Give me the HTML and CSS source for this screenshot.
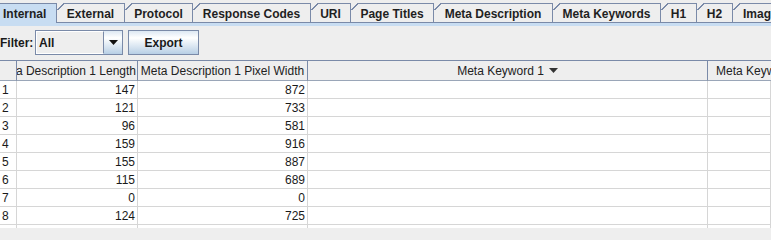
FILE: index.html
```html
<!DOCTYPE html>
<html>
<head>
<meta charset="utf-8">
<link rel="stylesheet" href="styles.css">
</head>
<body>
<div class="tabbar">
  <div class="tab sel w-internal">Internal</div>
  <div class="tab w-external">External</div>
  <div class="tab w-protocol">Protocol</div>
  <div class="tab w-response">Response Codes</div>
  <div class="tab w-uri">URI</div>
  <div class="tab w-titles">Page Titles</div>
  <div class="tab w-mdesc">Meta Description</div>
  <div class="tab w-mkey">Meta Keywords</div>
  <div class="tab w-h1">H1</div>
  <div class="tab w-h2">H2</div>
  <div class="tab w-img">Images</div>
</div>
<div class="tabline"></div>
<div class="toolbar">
  <span class="label">Filter:</span>
  <div class="combo">
    <div class="combo-text">All</div>
    <div class="combo-btn"><svg width="9" height="5" viewBox="0 0 9 5"><path d="M0 0H9L4.5 5Z" fill="#111"/></svg></div>
  </div>
  <div class="button">Export</div>
</div>
<div class="table">
  <div class="hcell"></div>
  <div class="hcell clip"><span>Meta Description 1 Length</span></div>
  <div class="hcell center">Meta Description 1 Pixel Width</div>
  <div class="hcell center">Meta Keyword 1<svg class="sort" width="9" height="5" viewBox="0 0 9 5"><path d="M0 0H9L4.5 5Z" fill="#333"/></svg></div>
  <div class="hcell last">Meta Keyword 2</div>

  <div class="cell num">1</div><div class="cell r">147</div><div class="cell r">872</div><div class="cell"></div><div class="cell"></div>
  <div class="cell num">2</div><div class="cell r">121</div><div class="cell r">733</div><div class="cell"></div><div class="cell"></div>
  <div class="cell num">3</div><div class="cell r">96</div><div class="cell r">581</div><div class="cell"></div><div class="cell"></div>
  <div class="cell num">4</div><div class="cell r">159</div><div class="cell r">916</div><div class="cell"></div><div class="cell"></div>
  <div class="cell num">5</div><div class="cell r">155</div><div class="cell r">887</div><div class="cell"></div><div class="cell"></div>
  <div class="cell num">6</div><div class="cell r">115</div><div class="cell r">689</div><div class="cell"></div><div class="cell"></div>
  <div class="cell num">7</div><div class="cell r">0</div><div class="cell r">0</div><div class="cell"></div><div class="cell"></div>
  <div class="cell num">8</div><div class="cell r">124</div><div class="cell r">725</div><div class="cell"></div><div class="cell"></div>
  <div class="cell stub"></div><div class="cell stub"></div><div class="cell stub"></div><div class="cell stub"></div><div class="cell stub"></div>
</div>
</body>
</html>
```

FILE: styles.css
```css
html, body {
  margin: 0;
  padding: 0;
  background: #eeeeee;
  font-family: "Liberation Sans", Arial, sans-serif;
  font-size: 12px;
  color: #1a1a1a;
  overflow: hidden;
}

body {
  width: 771px;
}

.tabbar {
  display: flex;
  height: 22px;
  padding-top: 3px;
  box-sizing: border-box;
  white-space: nowrap;
  overflow: hidden;
}

.tab {
  position: relative;
  flex: none;
  height: 19px;
  box-sizing: border-box;
  border: 1px solid #7a8aa8;
  border-bottom: none;
  border-left: none;
  display: flex;
  align-items: center;
  justify-content: center;
  font-weight: bold;
  color: #1f1f1f;
  background: #eeeeee;
  padding-top: 1px;
}

.tab::before {
  content: "";
  position: absolute;
  top: -1px;
  left: 0;
  width: 7px;
  height: 7px;
  background: linear-gradient(135deg, #eeeeee 0 44%, #7a8aa8 44% 58%, transparent 58%);
}

.tab.sel {
  background: #c8ddf2;
  justify-content: flex-start;
  padding-left: 3px;
}
.tab.sel::before { display: none; }

.w-internal { width: 57px; }
.w-external { width: 68px; }
.w-protocol { width: 68px; }
.w-response { width: 118px; }
.w-uri { width: 40px; }
.w-titles { width: 83px; }
.w-mdesc { width: 119px; }
.w-mkey { width: 108px; }
.w-h1 { width: 36px; }
.w-h2 { width: 36px; }
.w-img { width: 60px; justify-content: flex-start; padding-left: 10px; }

.tabline {
  height: 4px;
  background:
    linear-gradient(to right, #c8ddf2 56px, #7a8aa8 56px) top / 100% 1px no-repeat,
    #c8ddf2;
}

.toolbar {
  display: flex;
  align-items: center;
  height: 34px;
  padding-top: 4px;
  padding-bottom: 5px;
  box-sizing: border-box;
  font-weight: bold;
}

.label {
  width: 35px;
  padding-top: 1px;
}

.combo {
  display: flex;
  width: 88px;
  height: 25px;
  box-sizing: border-box;
  border: 1px solid #7a8aa8;
  background: #eeeeee;
}

.combo-text {
  flex: 1;
  box-sizing: border-box;
  border: 1px solid #fff;
  border-right: 1px solid #7a8aa8;
  padding-left: 2px;
  display: flex;
  align-items: center;
}

.combo-btn {
  width: 18px;
  display: flex;
  align-items: center;
  justify-content: center;
  background: linear-gradient(#dde8f3 0%, #ffffff 30%, #b8cfe5 100%);
}

.button {
  margin-left: 5px;
  width: 71px;
  height: 25px;
  box-sizing: border-box;
  border: 1px solid #7a8aa8;
  background: linear-gradient(#dde8f3 0%, #ffffff 30%, #b8cfe5 100%);
  display: flex;
  align-items: center;
  justify-content: center;
}

.table {
  display: grid;
  grid-template-columns: 17px 121px 170px 400px 1fr;
  border-top: 1px solid #7a8aa8;
  background: #ffffff;
  overflow: hidden;
}

.hcell {
  height: 20px;
  box-sizing: border-box;
  background: #eeeeee;
  border-right: 1px solid #7a8aa8;
  border-bottom: 1px solid #9aa6b8;
  display: flex;
  align-items: center;
  white-space: nowrap;
  overflow: hidden;
  color: #222;
}

.hcell.clip {
  justify-content: flex-end;
  padding-right: 1px;
}

.hcell.center {
  justify-content: center;
}

.hcell.last {
  border-right: none;
  padding-left: 8px;
}

.sort {
  margin-left: 5px;
}

.cell {
  height: 18px;
  box-sizing: border-box;
  border-right: 1px solid #d6d6d6;
  border-bottom: 1px solid #d6d6d6;
  display: flex;
  align-items: center;
  white-space: nowrap;
  overflow: hidden;
}

.cell.stub {
  height: 3px;
  border-bottom: none;
}

.cell.num {
  padding-left: 2px;
}

.cell.r {
  justify-content: flex-end;
  padding-right: 2px;
}
```
